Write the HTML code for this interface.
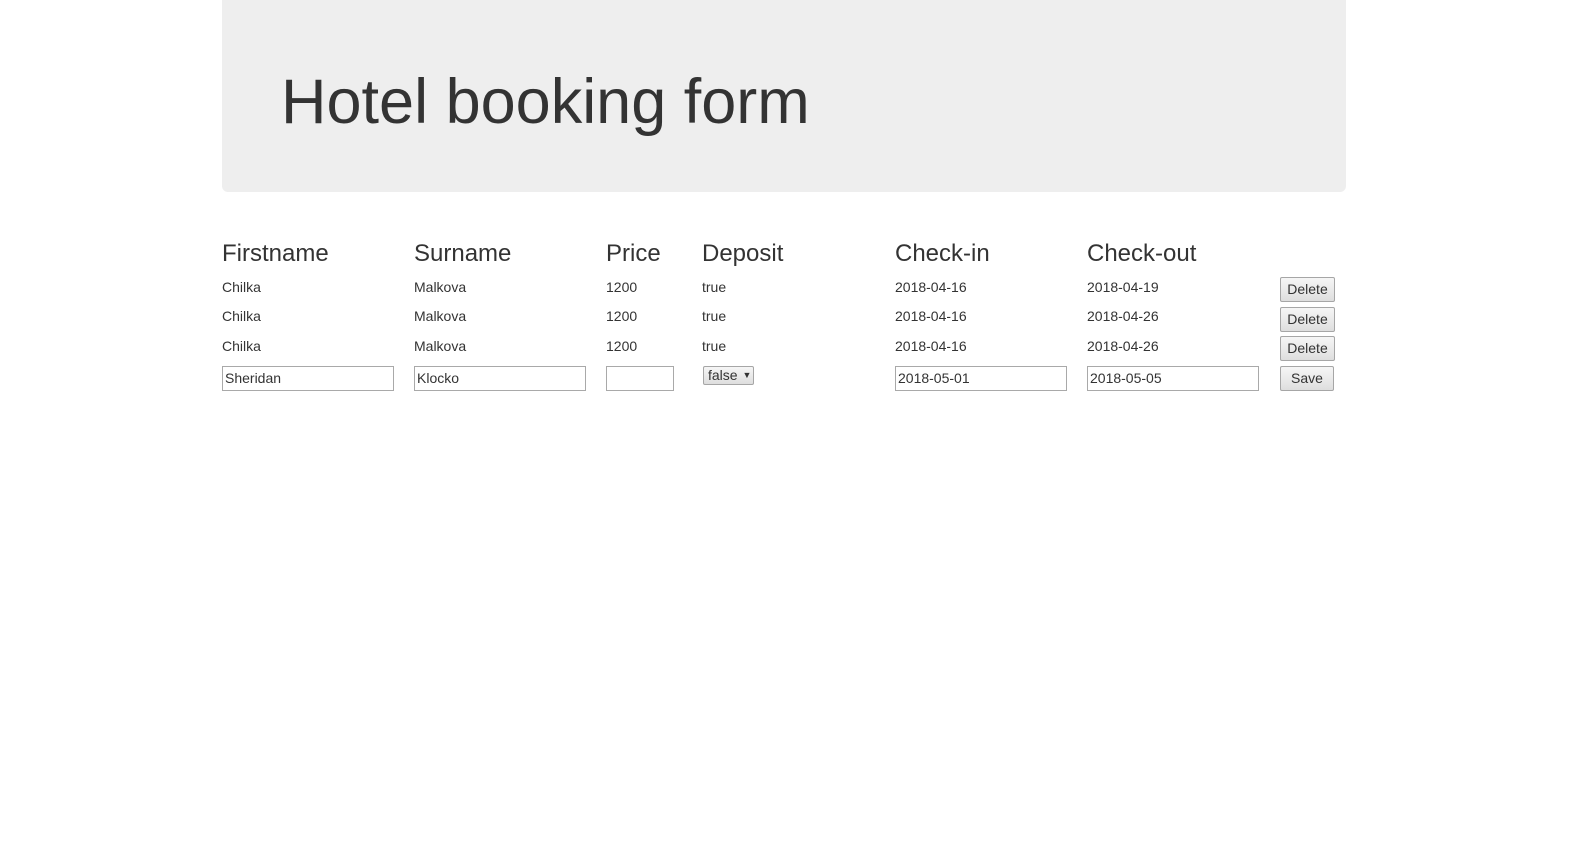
<!DOCTYPE html>
<html><head><style>
body{margin:0;background:#fff;font-family:"Liberation Sans",sans-serif;color:#333;}
.j{position:absolute;left:222px;top:0;width:1124px;height:192px;background:#eee;border-radius:0 0 6px 6px;}
.j h1{position:absolute;left:59px;top:64px;margin:0;font-size:63px;font-weight:normal;line-height:76px;}
.h{position:absolute;top:240px;font-size:24px;line-height:28px;}
.t{position:absolute;font-size:14px;line-height:16px;}
.in{position:absolute;box-sizing:border-box;height:25px;border:1px solid #a9a9a9;background:#fff;font-size:14px;line-height:23px;padding-left:2px;}
.b{position:absolute;left:1280px;box-sizing:border-box;width:55px;height:25px;border:1px solid #a6a6a6;border-radius:2px;background:linear-gradient(#f6f6f6,#dedede);font-size:14px;line-height:23px;text-align:center;}
.sel{position:absolute;left:703px;top:366px;box-sizing:border-box;width:51px;height:19px;border:1px solid #a6a6a6;border-radius:2px;background:linear-gradient(#f6f6f6,#dedede);font-size:14px;line-height:17px;padding-left:4px;}
</style></head><body>
<div class="j"><h1>Hotel booking form</h1></div>
<div class="h" style="left:222px">Firstname</div>
<div class="h" style="left:414px">Surname</div>
<div class="h" style="left:606px">Price</div>
<div class="h" style="left:702px">Deposit</div>
<div class="h" style="left:895px">Check-in</div>
<div class="h" style="left:1087px">Check-out</div>

<div class="t" style="left:222px;top:279px">Chilka</div><div class="t" style="left:414px;top:279px">Malkova</div><div class="t" style="left:606px;top:279px">1200</div><div class="t" style="left:702px;top:279px">true</div><div class="t" style="left:895px;top:279px">2018-04-16</div><div class="t" style="left:1087px;top:279px">2018-04-19</div>
<div class="b" style="top:277px">Delete</div>

<div class="t" style="left:222px;top:308px">Chilka</div><div class="t" style="left:414px;top:308px">Malkova</div><div class="t" style="left:606px;top:308px">1200</div><div class="t" style="left:702px;top:308px">true</div><div class="t" style="left:895px;top:308px">2018-04-16</div><div class="t" style="left:1087px;top:308px">2018-04-26</div>
<div class="b" style="top:307px">Delete</div>

<div class="t" style="left:222px;top:338px">Chilka</div><div class="t" style="left:414px;top:338px">Malkova</div><div class="t" style="left:606px;top:338px">1200</div><div class="t" style="left:702px;top:338px">true</div><div class="t" style="left:895px;top:338px">2018-04-16</div><div class="t" style="left:1087px;top:338px">2018-04-26</div>
<div class="b" style="top:336px">Delete</div>

<div class="in" style="left:222px;top:366px;width:172px">Sheridan</div>
<div class="in" style="left:414px;top:366px;width:172px">Klocko</div>
<div class="in" style="left:606px;top:366px;width:68px"></div>
<div class="sel">false <span style="font-size:9px;position:relative;top:-2px;left:1px">▼</span></div>
<div class="in" style="left:895px;top:366px;width:172px">2018-05-01</div>
<div class="in" style="left:1087px;top:366px;width:172px">2018-05-05</div>
<div class="b" style="top:366px;width:54px">Save</div>
</body></html>
